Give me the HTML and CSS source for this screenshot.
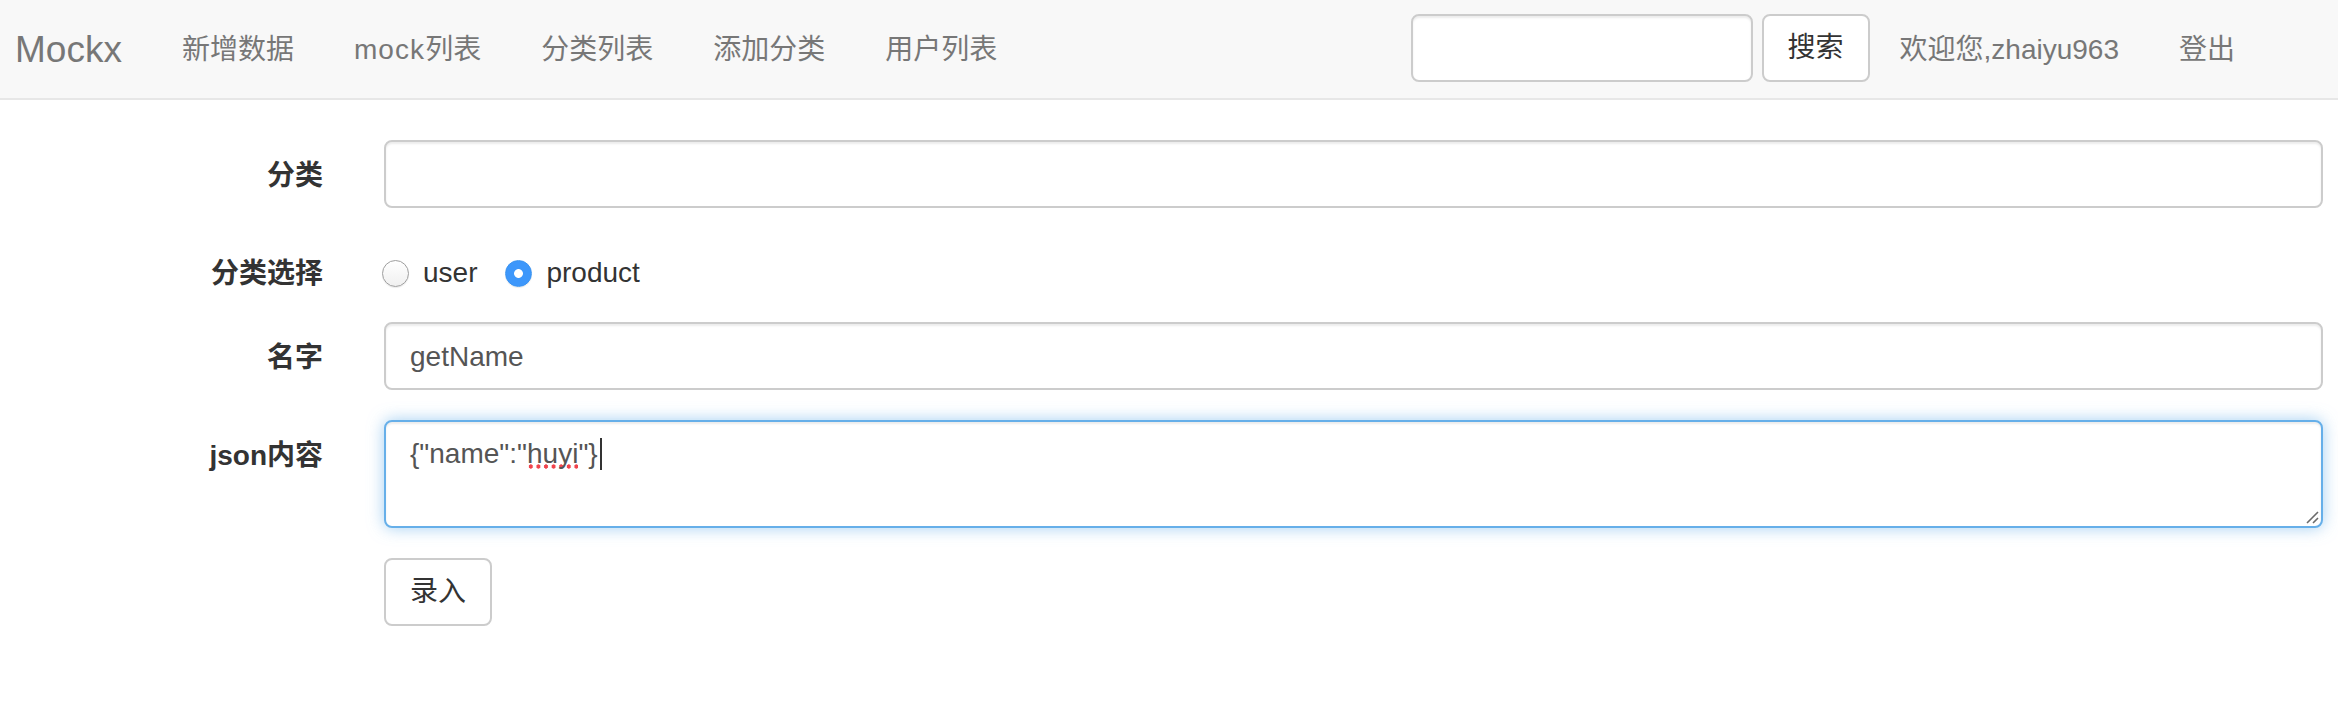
FILE: index.html
```html
<!DOCTYPE html>
<html lang="zh-CN">
<head>
<meta charset="utf-8">
<title>Mockx</title>
<link rel="stylesheet" href="styles.css">
</head>
<body>
<nav class="navbar">
  <a class="brand" href="#">Mockx</a>
  <ul class="nav">
    <li><a href="#">新增数据</a></li>
    <li><a href="#"><span class="latin-wide">mock</span>列表</a></li>
    <li><a href="#">分类列表</a></li>
    <li><a href="#">添加分类</a></li>
    <li><a href="#">用户列表</a></li>
  </ul>
  <div class="nav-right">
    <form class="search-form">
      <input class="search-input" type="text">
      <button class="btn" type="button">搜索</button>
    </form>
    <a class="nav-link" href="#">欢迎您,zhaiyu963</a>
    <a class="nav-link" href="#">登出</a>
  </div>
</nav>

<form class="main-form">
  <div class="form-row">
    <label class="control-label">分类</label>
    <div class="field"><input class="form-control" type="text"></div>
  </div>
  <div class="form-row radio-row">
    <label class="control-label">分类选择</label>
    <div class="field radios">
      <label class="radio-inline"><input class="radio" type="radio" name="cat"><span>user</span></label>
      <label class="radio-inline"><input class="radio" type="radio" name="cat" checked><span>product</span></label>
    </div>
  </div>
  <div class="form-row">
    <label class="control-label">名字</label>
    <div class="field"><input class="form-control" type="text" value="getName"></div>
  </div>
  <div class="form-row">
    <label class="control-label">json内容</label>
    <div class="field">
      <div class="form-control textarea focused">{"name":"<span class="misspelled">huyi</span>"}<span class="caret"></span>
        <svg class="resize-handle" width="16" height="16" viewBox="0 0 16 16"><path d="M15 4 L4 15 M15 10 L10 15" stroke="#6b6b6b" stroke-width="1.6" fill="none"/></svg>
      </div>
    </div>
  </div>
  <div class="form-row">
    <div class="field field-offset"><button class="btn" type="button">录入</button></div>
  </div>
</form>
</body>
</html>
```
FILE: styles.css
```css
html, body {
  margin: 0;
  padding: 0;
  background: #fff;
}
body {
  font-family: "Liberation Sans", "Noto Sans CJK SC", sans-serif;
  font-size: 28px;
  line-height: 40px;
  color: #333;
}
a {
  text-decoration: none;
}
.navbar {
  display: flex;
  height: 98px;
  background: #f8f8f8;
  border-bottom: 2px solid #e7e7e7;
}
.brand {
  padding: 30px 30px 28px 15px;
  font-size: 37px;
  line-height: 40px;
  color: #777;
}
.nav {
  display: flex;
  list-style: none;
  margin: 0;
  padding: 0;
}
.nav a, .nav-link {
  display: block;
  padding: 30px 30px 28px;
  line-height: 40px;
  color: #777;
}
.latin-wide {
  letter-spacing: 1.1px;
}
.nav-right {
  display: flex;
  margin-left: auto;
  margin-right: 73px;
}
.search-form {
  display: flex;
  gap: 9px;
  margin: 14px 0 0;
  align-self: flex-start;
}
.search-input {
  box-sizing: border-box;
  width: 342px;
  height: 68px;
  border: 2px solid #ccc;
  border-radius: 8px;
  box-shadow: inset 0 2px 2px rgba(0,0,0,.075);
  background: #fff;
  padding: 12px 24px;
  font: inherit;
  outline: none;
}
.btn {
  box-sizing: border-box;
  height: 68px;
  padding: 0 24px;
  border: 2px solid #ccc;
  border-radius: 8px;
  background: #fff;
  color: #333;
  font-family: inherit;
  font-size: 28px;
  line-height: 40px;
}
.main-form {
  padding-top: 40px;
}
.form-row {
  display: grid;
  grid-template-columns: 323px 1939px;
  column-gap: 61px;
  margin-bottom: 30px;
}
.control-label {
  padding-top: 16px;
  text-align: right;
  font-weight: bold;
  line-height: 40px;
}
.form-control {
  display: block;
  box-sizing: border-box;
  width: 100%;
  height: 68px;
  border: 2px solid #ccc;
  border-radius: 8px;
  box-shadow: inset 0 2px 2px rgba(0,0,0,.075);
  background: #fff;
  padding: 13px 24px 11px;
  font-family: inherit;
  font-size: 28px;
  line-height: 40px;
  color: #555;
  outline: none;
}
.radio-row {
  height: 54px;
}
.radios {
  display: flex;
  align-items: center;
  gap: 28px;
  padding-top: 15px;
  height: 40px;
  margin-left: -2px;
}
.radio-inline {
  display: flex;
  align-items: center;
  gap: 14px;
  color: #333;
}
.radio {
  -webkit-appearance: none;
  appearance: none;
  box-sizing: border-box;
  width: 27px;
  height: 27px;
  margin: 0;
  border-radius: 50%;
  border: 1px solid #9e9e9e;
  background: linear-gradient(#fff, #f0f0f0);
  box-shadow: 0 1px 1px rgba(0,0,0,.08);
}
.radio:checked {
  border: 1px solid #3a93f0;
  background: radial-gradient(circle, #fff 0 4px, #3d97fb 4.8px);
}
.textarea {
  position: relative;
  height: 108px;
  padding: 12px 24px;
  white-space: pre;
}
.focused {
  border-color: #66afe9;
  box-shadow: inset 0 2px 2px rgba(0,0,0,.075), 0 0 16px rgba(102,175,233,.6);
}
.misspelled {
  background-image: radial-gradient(circle, #f0444c 0 1.9px, transparent 2.4px);
  background-size: 7.6px 5px;
  background-repeat: repeat-x;
  background-position: 0 100%;
}
.caret {
  display: inline-block;
  width: 2px;
  height: 32px;
  margin-left: 2px;
  vertical-align: -7px;
  background: #333;
}
.resize-handle {
  position: absolute;
  right: 2px;
  bottom: 2px;
}
.field-offset {
  grid-column: 2;
}
```
